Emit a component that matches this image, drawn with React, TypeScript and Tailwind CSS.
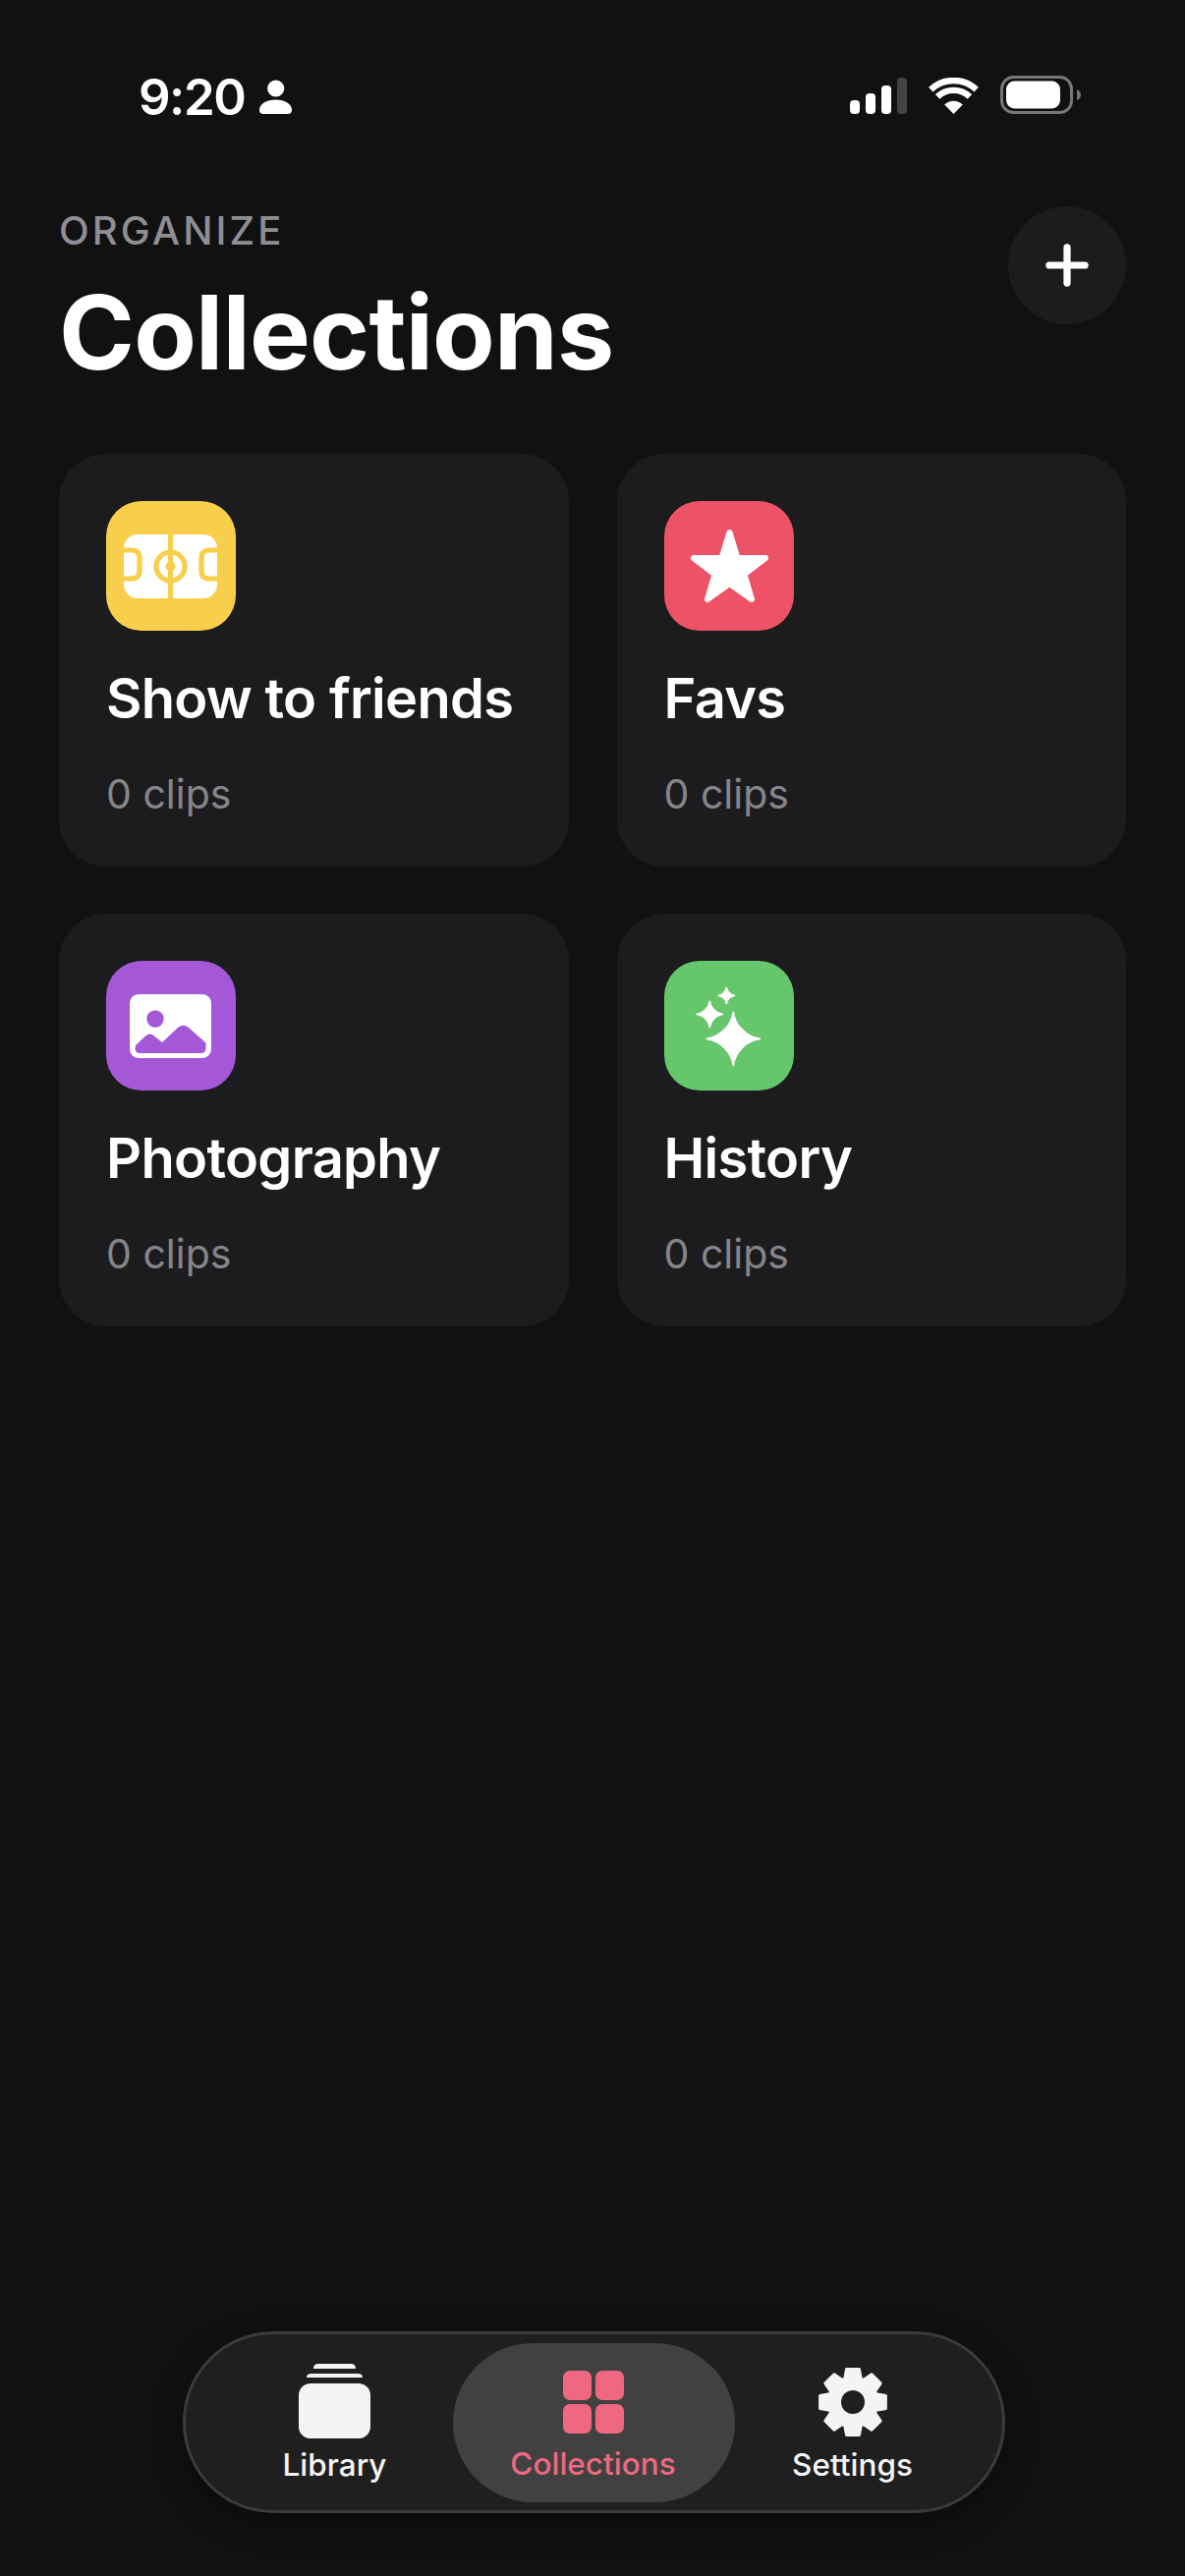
import { Plus } from "lucide-react";

const font = "font-['Inter',sans-serif]";

function sparkle(cx: number, cy: number, r: number) {
  const a = r * 0.06;
  const b = r * 0.5;
  return [
    `M${cx} ${cy - r}`,
    `C${cx + a} ${cy - b} ${cx + b} ${cy - a} ${cx + r} ${cy}`,
    `C${cx + b} ${cy + a} ${cx + a} ${cy + b} ${cx} ${cy + r}`,
    `C${cx - a} ${cy + b} ${cx - b} ${cy + a} ${cx - r} ${cy}`,
    `C${cx - b} ${cy - a} ${cx - a} ${cy - b} ${cx} ${cy - r}Z`,
  ].join("");
}

function gearPath(cx: number, cy: number, outer: number, root: number) {
  const teeth = 8;
  let d = "";
  for (let i = 0; i < teeth; i++) {
    const a = (i * 2 * Math.PI) / teeth - Math.PI / 2;
    const pts: [number, number][] = [
      [root, a - 0.34],
      [outer, a - 0.19],
      [outer, a + 0.19],
      [root, a + 0.34],
    ];
    for (const [r, t] of pts) {
      const x = (cx + r * Math.cos(t)).toFixed(2);
      const y = (cy + r * Math.sin(t)).toFixed(2);
      d += `${d ? "L" : "M"}${x} ${y}`;
    }
  }
  return d + "Z";
}

function PitchIcon() {
  return (
    <svg width="132" height="132" viewBox="0 0 132 132">
      <rect x="18" y="34" width="95" height="65" rx="14" fill="#fff" />
      <g fill="none" stroke="#f7cf4a" strokeWidth="5.2">
        <path d="M65.5 34V99" />
        <circle cx="65.5" cy="66.5" r="14.5" />
        <path d="M18 50H26Q34 50 34 58V71Q34 79 26 79H18" />
        <path d="M113 50H105Q97 50 97 58V71Q97 79 105 79H113" />
      </g>
      <circle cx="65.5" cy="66.5" r="5" fill="#f7cf4a" />
    </svg>
  );
}

function StarIcon() {
  return (
    <svg width="132" height="132" viewBox="0 0 132 132">
      <path
        d="M66.5 32L74.5 58H103L81.5 74.5L89 100L66.5 84L44 100L51.5 74.5L30 58H58.5Z"
        fill="#fff"
        stroke="#fff"
        strokeWidth="6"
        strokeLinejoin="round"
      />
    </svg>
  );
}

function PhotoIcon() {
  return (
    <svg width="132" height="132" viewBox="0 0 132 132">
      <rect x="24" y="34" width="83" height="65" rx="9" fill="#fff" />
      <circle cx="50" cy="59" r="8.7" fill="#a458d8" />
      <path
        d="M30 86L40 76.5Q44.5 72.5 49 76.5L57 83L73 68Q78.5 63.5 84 68L101.5 83.5V89Q101.5 94 96.5 94H35Q29.5 94 29.5 89Z"
        fill="#a458d8"
      />
    </svg>
  );
}

function SparkleIcon() {
  return (
    <svg width="132" height="132" viewBox="0 0 132 132">
      <g fill="#fff" stroke="#fff" strokeWidth="1.8" strokeLinejoin="round">
        <path d={sparkle(70.3, 79.3, 27)} />
        <path d={sparkle(46.3, 54.3, 13)} />
        <path d={sparkle(63.3, 35.3, 8)} />
      </g>
    </svg>
  );
}

function StatusBar() {
  return (
    <div className="flex h-[116px] items-end justify-between pl-[141px] pr-[106px]">
      <div className="flex items-end gap-[15px]">
        <span className={`${font} text-[51px] leading-[34px] font-semibold tracking-[-1.5px] text-white`}>9:20</span>
        <svg width="33" height="36" viewBox="0 0 33 36">
          <circle cx="16.7" cy="10" r="8.6" fill="#fff" />
          <path d="M0 32C0 26 7 21.5 16.5 21.5S33 26 33 32Q33 36 29 36H4Q0 36 0 32Z" fill="#fff" />
        </svg>
      </div>
      <div className="flex items-end">
        <svg width="58" height="37" viewBox="0 0 58 37">
          <rect x="0" y="23" width="10" height="14" rx="4" fill="#fff" />
          <rect x="16" y="16" width="10" height="21" rx="4" fill="#fff" />
          <rect x="32" y="8" width="10" height="29" rx="4" fill="#fff" />
          <rect x="48" y="0" width="10" height="37" rx="4" fill="#444446" />
        </svg>
        <svg className="ml-[22px]" width="51" height="37" viewBox="0 0 51 37">
          <g fill="none" stroke="#fff" strokeWidth="6.4">
            <path d="M2.3 12.1A34 34 0 0 1 48.7 12.1" />
            <path d="M9.1 19.4A24 24 0 0 1 41.9 19.4" />
          </g>
          <path d="M25.5 37L16.2 27.6A13 13 0 0 1 34.8 27.6Z" fill="#fff" />
        </svg>
        <svg className="ml-[22px]" width="82" height="39" viewBox="0 0 82 39">
          <rect x="1.5" y="1.5" width="71" height="36" rx="12" fill="none" stroke="#77777a" strokeWidth="3" />
          <rect x="6" y="5.5" width="55" height="28" rx="8.5" fill="#fff" />
          <path d="M78 14Q82 16 82 19.5T78 25Z" fill="#77777a" />
        </svg>
      </div>
    </div>
  );
}

function Card({ title, color, icon }: { title: string; color: string; icon: React.ReactNode }) {
  return (
    <div className="h-[420px] rounded-[48px] bg-[#1c1c1e] p-[48px]">
      <div className={`h-[132px] w-[132px] rounded-[36px] ${color}`}>{icon}</div>
      <div className={`${font} mt-[35px] text-[56px] leading-[68px] font-semibold tracking-[-0.7px] text-white`}>{title}</div>
      <div className={`${font} mt-[37px] text-[41px] leading-[52px] text-[#85858a]`}>0 clips</div>
    </div>
  );
}

function TabBar() {
  return (
    <div className="mb-[64px] ml-[186px] mt-auto flex h-[185px] w-[837px] items-center justify-center rounded-[92px] border-[3px] border-[#3b3b3c] bg-[#1f1f1f] shadow-[0_10px_30px_rgba(0,0,0,0.35)]">
      <div className="flex h-[162px] w-[264px] flex-col items-center">
        <svg className="mt-[21px]" width="73" height="76" viewBox="0 0 73 76">
          <path d="M15 5Q15 0 20 0H53Q58 0 58 5H15Z" fill="#f4f4f4" />
          <path d="M8 14Q8 10 13 10H60Q65 10 65 14H8Z" fill="#f4f4f4" />
          <rect x="0" y="20" width="73" height="56" rx="12" fill="#f4f4f4" />
        </svg>
        <span className={`${font} mt-[7px] text-[31.5px] leading-[40px] font-medium text-[#f4f4f4]`}>Library</span>
      </div>
      <div className="-mx-[11.5px] flex h-[162px] w-[287px] flex-col items-center rounded-[81px] bg-[#414141] pr-[2px]">
        <div className="mt-[28px] grid grid-cols-[29px_29px] grid-rows-[30px_30px] gap-[4px]">
          <div className="rounded-[7px] bg-[#ee6880]" />
          <div className="rounded-[7px] bg-[#ee6880]" />
          <div className="rounded-[7px] bg-[#ee6880]" />
          <div className="rounded-[7px] bg-[#ee6880]" />
        </div>
        <span className={`${font} mt-[11px] text-[31.5px] leading-[40px] font-medium text-[#ee6880]`}>Collections</span>
      </div>
      <div className="flex h-[162px] w-[264px] flex-col items-center pr-[2px]">
        <svg className="mt-[24px]" width="72" height="72" viewBox="0 0 72 72">
          <path
            d={gearPath(36, 36, 34, 25)}
            fill="#f4f4f4"
            stroke="#f4f4f4"
            strokeWidth="3"
            strokeLinejoin="round"
          />
          <circle cx="36" cy="36" r="12" fill="#1f1f1f" />
        </svg>
        <span className={`${font} mt-[8px] text-[31.5px] leading-[40px] font-medium text-[#f4f4f4]`}>Settings</span>
      </div>
    </div>
  );
}

export default function App() {
  return (
    <div className="flex h-[2622px] w-[1206px] flex-col overflow-hidden bg-[#111112]">
      <StatusBar />

      <div className="mt-[94px] flex items-start justify-between px-[60px]">
        <div className="pt-[1px]">
          <div className={`${font} text-[40px] leading-[48px] font-medium tracking-[3.1px] text-[#8e8e93]`}>ORGANIZE</div>
          <h1 className={`${font} mt-[19px] text-[104px] leading-[120px] font-bold tracking-[-0.8px] text-white`}>Collections</h1>
        </div>
        <button className="flex h-[120px] w-[120px] items-center justify-center rounded-full bg-[#1c1c1e] text-white">
          <Plus size={62} strokeWidth={2.8} />
        </button>
      </div>

      <div className="mt-[64px] grid grid-cols-2 gap-x-[49px] gap-y-[48px] px-[60px]">
        <Card title="Show to friends" color="bg-[#f7cf4a]" icon={<PitchIcon />} />
        <Card title="Favs" color="bg-[#ee5266]" icon={<StarIcon />} />
        <Card title="Photography" color="bg-[#a458d8]" icon={<PhotoIcon />} />
        <Card title="History" color="bg-[#66c66b]" icon={<SparkleIcon />} />
      </div>

      <TabBar />
    </div>
  );
}
